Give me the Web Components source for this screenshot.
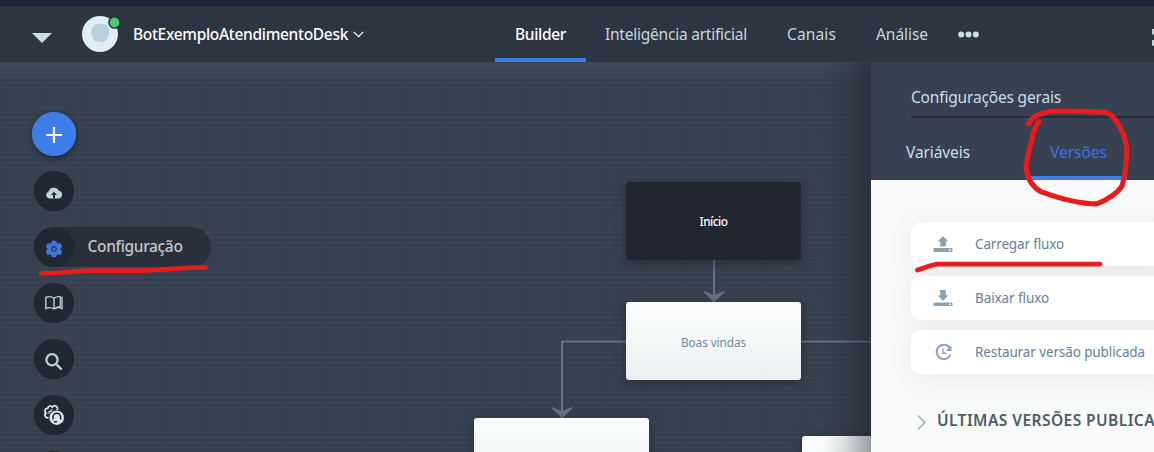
<!DOCTYPE html>
<html lang="pt-BR">
<head>
<meta charset="utf-8">
<title>Builder</title>
<style>
html,body{margin:0;height:100%;overflow:hidden;background:#37404f}
body{font-family:"Noto Sans",Lato,sans-serif;font-size:15.5px}
</style>
</head>
<body>
<bot-app></bot-app>
<script>
const define=(name,html,init)=>customElements.define(name,class extends HTMLElement{
  connectedCallback(){
    if(this.shadowRoot)return;
    const t=document.createElement('template');t.innerHTML=html;
    this.attachShadow({mode:'open'}).append(t.content.cloneNode(true));
    if(init)init(this,this.shadowRoot);
  }
});

// Label that spreads its letters evenly over a given width
define('fit-label',`<style>:host{display:inline-block;white-space:nowrap;flex:none}span{display:inline-block;white-space:nowrap}</style><span><slot></slot></span>`,(el,root)=>{
  const w=+el.getAttribute('w'),s=root.querySelector('span');
  el.style.width=w+'px';
  s.style.letterSpacing=(w-s.getBoundingClientRect().width)/el.textContent.length+'px';
});

define('bot-avatar',`<style>:host{display:block;position:relative;width:36px;height:36px;flex:none}svg{display:block;overflow:visible}</style>
<svg width="36" height="36" viewBox="0 0 36 36"><circle cx="18" cy="18" r="18" fill="#dfeff5"/>
<path d="M16 8h4q7 0 7 8 0 8-5 9.3l-3 2.5v-2.4h-3q-6.5-.4-6.5-9.4 0-8 6.500-8z" fill="#b9d1e0"/>
<circle cx="32.500" cy="6.500" r="6.300" fill="#252c38"/><circle cx="32.500" cy="6.500" r="4.900" fill="#4bca78"/></svg>`);

define('nav-tab',`<style>:host{display:flex;align-items:center;box-sizing:border-box;height:56px;padding:0 20px 1px;color:#c3d8df;border-bottom:4px solid transparent;border-top:4px solid transparent}
:host([active]){color:#fff;border-bottom-color:#3f7de8;font-weight:500}</style><slot></slot>`);

define('top-bar',`<style>:host{display:flex;box-sizing:border-box;height:62px;border-top:6px solid #1b2638;background:#2e3542;align-items:center;position:relative;z-index:3;overflow:hidden}
svg{display:block;flex:none}.caret{margin:8px 30px 0 32px}.name{color:#fff;margin-left:15px;margin-top:-1px;font-weight:500}.chev{margin-left:5px}nav{display:flex;margin-left:131px}.dots{margin-left:10px;margin-top:1px}.grid{margin-left:auto;margin-top:6px}</style>
<svg class="caret" width="20" height="10"><path d="M0 0h20L10 10z" fill="#c9dfe6"/></svg>
<bot-avatar></bot-avatar>
<fit-label class="name" w="215">BotExemploAtendimentoDesk</fit-label>
<svg class="chev" width="11" height="7"><path d="M.7.9 5.500 5.600 10.300.9" fill="none" stroke="#fff" stroke-width="1.300"/></svg>
<nav><nav-tab active><fit-label w="51">Builder</fit-label></nav-tab><nav-tab style="padding-left:19px"><fit-label w="142">Inteligência artificial</fit-label></nav-tab><nav-tab><fit-label w="49">Canais</fit-label></nav-tab><nav-tab><fit-label w="52">Análise</fit-label></nav-tab></nav>
<svg class="dots" width="21" height="7"><g fill="#c9dfe6"><circle cx="3.200" cy="3.500" r="3"/><circle cx="10.500" cy="3.500" r="3"/><circle cx="17.800" cy="3.500" r="3"/></g></svg>
<svg class="grid" width="2" height="17"><path d="M2 .5H1.500Q.8.500.8 1.500v4M.8 11v4q0 1 1.200 1" fill="none" stroke="#c9dfe6" stroke-width="2"/></svg>`);

// Blocks and connectors of the flow, at their places on the canvas
define('flow-node',`<style>:host{position:absolute;display:flex;align-items:center;justify-content:center;box-sizing:border-box;width:175px;height:78px;padding-top:1px;border-radius:3px;font-size:11.8px;color:#738aa5;background:linear-gradient(#fcfdfe,#f4f8f8 40%,#ebeff2);box-shadow:0 3px 12px rgba(26,33,46,.55)}
:host([start]){background:#212631;color:#fff;font-weight:500;padding-top:0}</style><slot></slot>`);

define('flow-canvas',`<style>:host{display:block;position:relative;overflow:hidden;background:repeating-linear-gradient(180deg,rgba(88,102,122,.08) 0 1px,transparent 1px 5px,rgba(88,102,122,.14) 5px 6px,transparent 6px 10px),repeating-linear-gradient(90deg,transparent 0 9px,rgba(88,102,122,.08) 9px 10px),#37404f}
:host::before{content:"";position:absolute;inset:0 0 auto;height:20px;background:linear-gradient(rgba(70,82,101,.5),transparent)}
:host::after{content:"";position:absolute;top:0;right:0;bottom:0;width:50px;background:linear-gradient(90deg,rgba(20,26,34,0),rgba(20,26,34,.12) 45%,rgba(20,26,34,.42))}
.links{position:absolute;left:0;top:0}</style>
<svg class="links" width="871" height="390" viewBox="0 62 871 390"><g stroke="#687384" stroke-width="2" fill="none"><path d="M714 260v35M626 341.500h-64V411M801 341.500h70"/></g>
<g fill="#687384"><path d="M704 291l10 4.300 10-4.300v1.500L714 302.500 704 292.500z"/><path d="M552 407l10 4.300 10-4.300v1.500L562 418.500 552 408.500z"/></g></svg>
<flow-node start style="left:626px;top:120px"><fit-label w="28">Início</fit-label></flow-node>
<flow-node style="left:626px;top:240px"><fit-label w="65">Boas vindas</fit-label></flow-node>
<flow-node style="left:474px;top:356px"></flow-node>
<flow-node style="left:802px;top:374px"></flow-node>
<slot></slot>`);

define('tool-button',`<style>:host{display:flex;width:40px;height:40px;border-radius:20px;background:#212833;flex:none}
.i{display:flex;width:40px;height:40px;align-items:center;justify-content:center;flex:none;border-radius:50%;background:#212833}
:host([main]),:host([main]) .i{width:44px;height:44px;border-radius:22px;background:#3f7ee8}
:host([main]){box-shadow:0 2px 6px rgba(15,20,30,.65)}
:host([open]){width:177px;background:#292f3b}::slotted(fit-label){align-self:center;margin:-2px 0 0 13.5px;color:#c4c7cb;font-weight:500}</style>
<div class="i"><slot name="icon"></slot></div><slot></slot>`);

define('tool-rail',`<style>:host{position:absolute;z-index:1;left:32px;top:50px;display:flex;flex-direction:column;gap:16px}svg{display:block;overflow:visible}
tool-button:not([main]){margin-left:2px}tool-button[main]{margin-bottom:-1px}</style>
<tool-button main><svg slot="icon" width="16" height="16" style="margin-top:2px"><path d="M8 0v16M0 8h16" stroke="#fff" stroke-width="2.200"/></svg></tool-button>
<tool-button><svg slot="icon" width="18" height="12" style="margin-top:3px"><path d="M4 11.500a4 3.700 0 0 1-.4-7A5.600 5.400 0 0 1 14 3.700a4 4 0 0 1 0 7.800z" fill="#bcd1d8"/><path d="M9 4.800 12 8H10v3.500H8V8H6z" fill="#212833"/></svg></tool-button>
<tool-button open><svg slot="icon" width="18" height="18" viewBox="-9 -9 18 18" style="margin-top:4px"><g fill="#3f78d9"><circle r="6.800"/><rect x="-2.500" y="-8.200" width="5" height="16.400" rx="1.200"/><rect x="-2.500" y="-8.500" width="5" height="17" rx="1.200" transform="rotate(60)"/><rect x="-2.500" y="-8.500" width="5" height="17" rx="1.200" transform="rotate(120)"/></g><circle r="2.300" fill="none" stroke="#263956" stroke-width="1.300"/></svg><fit-label w="95">Configuração</fit-label></tool-button>
<tool-button><svg slot="icon" width="18" height="14" style="margin-top:-1px"><path d="M9 2.200Q5-.6.8 1.500v11Q5 10.500 9 13q4-2.500 8-.5v-11Q13-.6 9 2.200V13" fill="none" stroke="#bcd1d8" stroke-width="1.400"/><path d="M15.300 1.500v8.800q-3 .2-6 2.500" fill="none" stroke="#bcd1d8" stroke-width="1.200"/></svg></tool-button>
<tool-button><svg slot="icon" width="17" height="17" style="margin-top:4px;margin-right:1px"><circle cx="7" cy="6.800" r="5.600" fill="none" stroke="#bcd1d8" stroke-width="2.300"/><path d="m11 11 5 4.800" stroke="#bcd1d8" stroke-width="2.400" stroke-linecap="round"/></svg></tool-button>
<tool-button><svg slot="icon" width="20" height="20"><path d="M4.500 12.500A2.600 2.600 0 0 1 2 8 2.600 2.600 0 0 1 3.700 3.300 2.800 2.800 0 0 1 8.500 2 2.700 2.700 0 0 1 13 5" fill="none" stroke="#dce2ec" stroke-width="1.800"/><path d="M5 9V6.500h2V5h1.800" fill="none" stroke="#dce2ec" stroke-width="1.100"/><circle cx="12.700" cy="12.700" r="7.300" fill="#dce2ec"/><path d="M9 14.500V12a3.800 3.800 0 0 1 7.600 0v2.500M10 16.800h3" fill="none" stroke="#212833" stroke-width="1.500"/></svg></tool-button>
<tool-button></tool-button>`);

define('panel-header',`<style>:host{display:block;height:118px;box-sizing:border-box;background:#374151;color:#c9dfe8;overflow:hidden}
.title{height:56px;margin-left:40px;box-sizing:border-box;padding-top:25px;border-bottom:2px solid #272e3a;line-height:20px}
.tabs{display:flex;gap:40px;margin-left:15px;height:62px}.tabs div{display:flex;align-items:center;padding:10px 20px 0;box-sizing:border-box;border-bottom:4px solid transparent}.tabs .on{color:#3f72e4;border-color:#3f7de8}</style>
<div class="title"><fit-label w="150">Configurações gerais</fit-label></div>
<div class="tabs"><div><fit-label w="64">Variáveis</fit-label></div><div class="on"><fit-label w="57">Versões</fit-label></div></div>`);

define('action-row',`<style>:host{display:flex;align-items:center;height:44px;border-radius:10px;background:#fff;color:#6482a0;font-size:13.5px;box-shadow:0 4px 28px rgba(60,72,72,.085)}
.i{display:flex;width:20px;height:20px;margin:0 22px;align-items:center;justify-content:center}::slotted(fit-label){margin-top:-1px}</style><div class="i"><slot name="icon"></slot></div><slot></slot>`);

define('side-panel',`<style>:host{display:block;position:relative;background:#f8faf9;overflow:hidden}
.list{display:flex;flex-direction:column;gap:10px;margin:42px -20px 0 40px}svg{display:block;overflow:visible}
.last{display:flex;align-items:center;margin:35px 0 0 46px;height:24px;color:#4e5d6a;font-weight:600;font-size:15.5px}.last svg{margin:2px 11px 0 0}.last fit-label{margin-top:-3px}</style>
<panel-header></panel-header>
<div class="list">
<action-row><svg slot="icon" width="20" height="16"><path d="M10 0 15.200 5.500H12.800V10.500H7.200V5.500H4.800z" fill="#8ba1b7"/><rect x=".5" y="12" width="19" height="4" rx="1" fill="#8ba1b7"/><path d="M16 13.300h2v1.400h-2z" fill="#fff"/></svg><fit-label w="89">Carregar fluxo</fit-label></action-row>
<action-row><svg slot="icon" width="20" height="16"><path d="M7.200 0h5.600v5.500h2.400L10 11 4.800 5.500h2.400z" fill="#8ba1b7"/><rect x=".5" y="12.500" width="19" height="3.500" rx="1" fill="#8ba1b7"/><path d="M16 13.600h2v1.300h-2z" fill="#fff"/></svg><fit-label w="74">Baixar fluxo</fit-label></action-row>
<action-row><svg slot="icon" width="17" height="17"><path d="M15 4A7.200 7.200 0 1 0 15.600 10.500" fill="none" stroke="#8ba1b7" stroke-width="2"/><path d="M16.500 1.500V7H11z" fill="#8ba1b7"/><path d="M8 4.500v4.700h3.500" fill="none" stroke="#8ba1b7" stroke-width="1.400"/></svg><fit-label w="170">Restaurar versão publicada</fit-label></action-row>
</div>
<div class="last"><svg width="9" height="15"><path d="m1 .7 6.800 6.800L1 14.300" fill="none" stroke="#a9bdc5" stroke-width="1.900"/></svg><fit-label w="218">ÚLTIMAS VERSÕES PUBLICA</fit-label></div>`);

// Hand-drawn red marks over the page
define('ink-marks',`<style>:host{position:absolute;inset:0;z-index:5;pointer-events:none}svg{display:block}</style>
<svg width="1154" height="452" fill="none" stroke="#e81c1c" stroke-linecap="round" stroke-linejoin="round"><path stroke-width="4.600" d="M41 273.300c18 0 30-2 48-2.700h55c22-1 42-2.800 61.500-3.300"/><path stroke-width="4.800" d="M917.500 270c6-1.800 13-5.200 20-5.900h162.500"/>
<path stroke-width="5.200" d="M1028.800 123.500c2-6 11-10.500 24-12.300 20-.9 36 .8 48.500.8 7 0 10 2 14 8 6 8 11 19 11.500 30.500-.5 14-2 27-5 36-5 7-15 13.500-25 17.400-16 0-36-5-55.500-12-9-5-14-14-15.300-24 .2-8 4-20 5.800-28 1-8 3-13 7-18.400"/></svg>`);

define('bot-app',`<style>:host{position:relative;display:grid;grid-template:62px 390px/871px 283px;width:1154px;height:452px;overflow:hidden}top-bar{grid-column:1/3}</style>
<top-bar></top-bar><flow-canvas><tool-rail></tool-rail></flow-canvas><side-panel></side-panel><ink-marks></ink-marks>`);
</script>
</body>
</html>
